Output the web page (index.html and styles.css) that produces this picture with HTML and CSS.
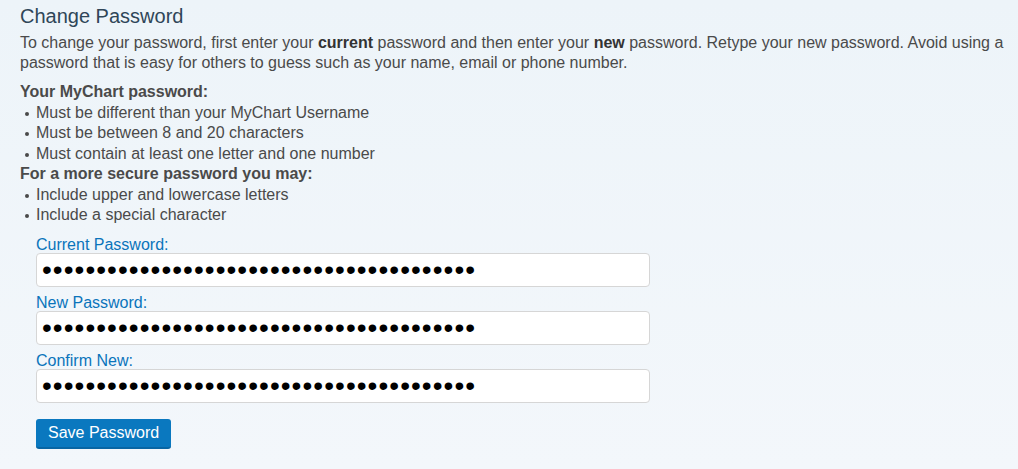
FILE: index.html
```html
<!DOCTYPE html>
<html lang="en">
<head>
<meta charset="utf-8">
<title>Change Password</title>
<link rel="stylesheet" href="styles.css">
</head>
<body>
<main class="page">
  <h1 class="title">Change Password</h1>
  <p class="intro">To change your password, first enter your <b>current</b> password and then enter your <b>new</b> password. Retype your new password. Avoid using a password that is easy for others to guess such as your name, email or phone number.</p>
  <div class="rules">
    <div class="rules-head">Your MyChart password:</div>
    <ul class="rule-list">
      <li>Must be different than your MyChart Username</li>
      <li>Must be between 8 and 20 characters</li>
      <li>Must contain at least one letter and one number</li>
    </ul>
    <div class="rules-head">For a more secure password you may:</div>
    <ul class="rule-list">
      <li>Include upper and lowercase letters</li>
      <li>Include a special character</li>
    </ul>
  </div>
  <form class="form">
    <label class="field">
      <span class="label">Current Password:</span>
      <input class="input" type="password" value="aaaaaaaaaaaaaaaaaaaaaaaaaaaaaaaaaaaaaaaa">
    </label>
    <label class="field">
      <span class="label">New Password:</span>
      <input class="input" type="password" value="aaaaaaaaaaaaaaaaaaaaaaaaaaaaaaaaaaaaaaaa">
    </label>
    <label class="field">
      <span class="label">Confirm New:</span>
      <input class="input" type="password" value="aaaaaaaaaaaaaaaaaaaaaaaaaaaaaaaaaaaaaaaa">
    </label>
    <button class="btn" type="button">Save Password</button>
  </form>
</main>
</body>
</html>
```

FILE: styles.css
```css
html, body {
  margin: 0;
  padding: 0;
}
body {
  background: linear-gradient(to bottom, #edf4f9 0%, #f3f7fb 100%);
  min-height: 469px;
  font-family: "Liberation Sans", Arial, sans-serif;
  color: #4a4a4a;
  font-size: 16px;
}
.page {
  padding: 4px 8px 0 20px;
}
.title {
  margin: 0;
  font-size: 20px;
  font-weight: normal;
  color: #2f4658;
  line-height: 24px;
}
.intro {
  margin: 5px 0 0;
  line-height: 20px;
}
.intro b {
  color: #333;
}
.rules {
  margin-top: 9px;
  line-height: 20.5px;
}
.rules-head {
  font-weight: bold;
  color: #4a4a4a;
}
.rule-list {
  list-style: none;
  margin: 0;
  padding: 0;
}
.rule-list li {
  position: relative;
  padding-left: 16px;
}
.rule-list li::before {
  content: "";
  position: absolute;
  left: 5px;
  top: 9px;
  width: 4px;
  height: 4px;
  border-radius: 50%;
  background: #4a4a4a;
}
.form {
  padding-left: 16px;
  margin-top: 10px;
  display: flex;
  flex-direction: column;
  align-items: flex-start;
}
.field {
  display: flex;
  flex-direction: column;
  margin-bottom: 7px;
}
.label {
  color: #0a74bb;
  font-size: 16px;
  line-height: 17px;
}
.input {
  box-sizing: border-box;
  width: 614px;
  height: 34px;
  margin: 0;
  border: 1px solid #d6d6d6;
  border-radius: 4px;
  background: #fff;
  padding: 0 0 0 5px;
  font-family: "Liberation Sans", Arial, sans-serif;
  font-size: 28px;
  letter-spacing: 1.05px;
  color: #000;
  outline: none;
}
.btn {
  margin-top: 9px;
  height: 30px;
  padding: 0 12px;
  background: #0a78bf;
  border: none;
  border-bottom: 2px solid #0865a3;
  border-radius: 3px;
  color: #fff;
  font-family: "Liberation Sans", Arial, sans-serif;
  font-size: 16px;
  cursor: pointer;
}
```
